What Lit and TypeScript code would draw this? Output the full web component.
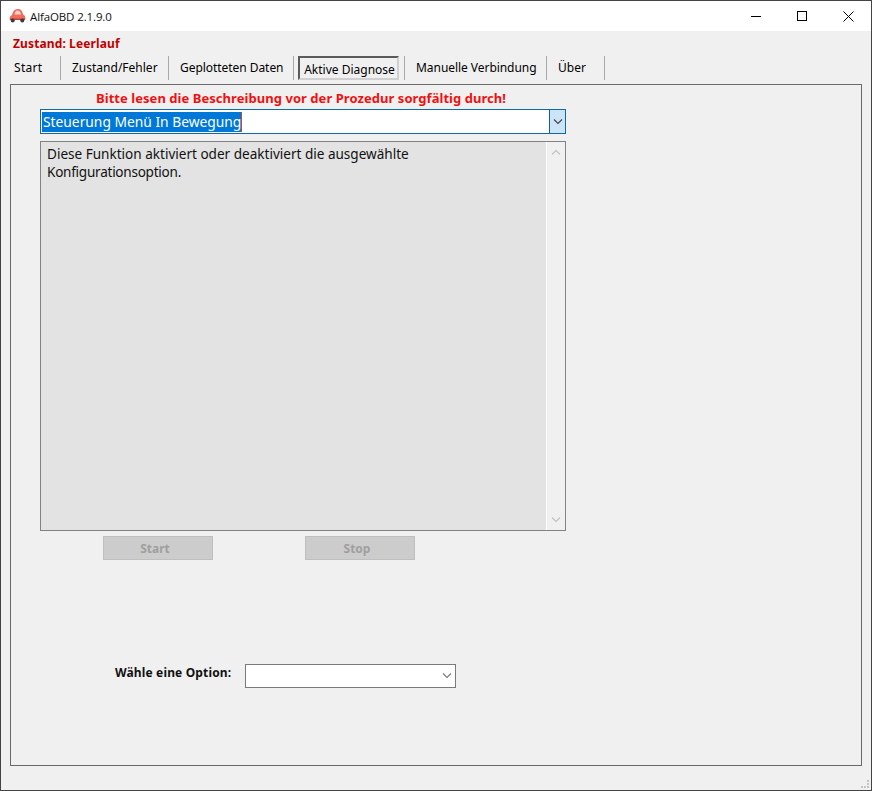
import { LitElement, html, css } from "lit";
import { customElement } from "lit/decorators.js";

const chev = (c: string, up = false) => html`<svg width="10" height="6" viewBox="0 0 10 6"><path d="${up ? "M1 5.500L5 1.500L9 5.500" : "M1 .5L5 4.500L9 .5"}" fill="none" stroke="${c}" stroke-width="1.100"/></svg>`;

@customElement("app-root")
export class AppRoot extends LitElement {
  static styles = css`
    :host { display: block; width: 872px; height: 791px; font-family: "Noto Sans", "Liberation Sans", sans-serif; font-size: 12px; color: #000; }
    .win { box-sizing: border-box; width: 872px; height: 791px; border: 1px solid #444; background: #f0f0f0; display: flex; flex-direction: column; position: relative; overflow: hidden; }
    .title { height: 30px; background: #fff; display: flex; align-items: center; flex: none; }
    .logo { margin: 0 0 2px 8px; width: 17px; height: 15px; display: block; }
    .tt { margin-left: 4px; font-family: "Open Sans", sans-serif; font-size: 11.5px; letter-spacing: -.12px; color: #111; }
    .ctrls { margin-left: auto; display: flex; align-items: center; }
    .ctrl { width: 46px; height: 30px; display: flex; align-items: center; justify-content: center; }
    .state { margin: 5px 0 0 12px; height: 15px; line-height: 15px; font-weight: 700; color: #c00000; font-size: 12px; letter-spacing: .12px; }
    .tabs { display: flex; height: 25px; margin: 4px 0 0 0; align-items: center; }
    .tab { box-sizing: border-box; height: 24px; display: flex; align-items: center; font-size: 12px; border-right: 1px solid #a8a8a8; }
    .t1 { width: 60px; padding-left: 13px; letter-spacing: .3px; }
    .t2 { width: 108px; padding-left: 11px; }
    .t3 { width: 125px; padding-left: 11px; letter-spacing: -.05px; }
    .t4 { width: 111px; padding-left: 4px; }
    .t5 { width: 142px; padding-left: 11px; letter-spacing: -.05px; }
    .t6 { width: 58px; padding-left: 11px; }
    .active { box-sizing: border-box; width: 101px; height: 24px; border: 2px solid; border-color: #5a5a5a #d0d0d0 #d0d0d0 #5a5a5a; display: flex; align-items: center; justify-content: center; padding: 3px 0 0 2px; }
    .panel { box-sizing: border-box; margin: 4px 9px 0 9px; height: 682px; border: 1px solid #6a6a6a; position: relative; padding-left: 29px; }
    .warn { margin-left: 56px; height: 24px; line-height: 26px; font-size: 13px; font-weight: 700; color: #f01010; letter-spacing: .05px; }
    .combo { box-sizing: border-box; width: 526px; height: 25px; border: 1px solid #0f6ba8; background: #fff; display: flex; }
    .sel { box-sizing: border-box; margin: 2px 0 0 1px; height: 20px; line-height: 20px; padding: 0 0 0 1px; border-right: 1px solid #b0503c; background: #0078d7; color: #fff; font-size: 13.8px; }
    .dd { margin-left: auto; box-sizing: border-box; width: 16px; border-left: 1px solid #0f5f94; background: #cce4f7; display: flex; align-items: center; justify-content: center; }
    .text { box-sizing: border-box; margin-top: 7px; width: 526px; height: 390px; border: 1px solid #828282; display: flex; background: #f0f0f0; }
    .desc { box-sizing: border-box; width: 506px; background: #e3e3e3; padding: 3px 6px; font-size: 13.55px; line-height: 18px; color: #111; border-right: 1px solid #fff; }
    .l2 { letter-spacing: -.25px; }
    .sb { flex: 1; display: flex; flex-direction: column; align-items: center; justify-content: space-between; padding: 7px 0; }
    .btns { display: flex; margin: 5px 0 0 63px; gap: 92px; }
    .btn { box-sizing: border-box; width: 110px; height: 24px; border: 1px solid #bfbfbf; background: #cccccc; color: #9f9f9f; font-weight: 700; font-size: 12px; display: flex; align-items: center; justify-content: center; padding-right: 6px; }
    .opt { display: flex; margin: 104px 0 0 75px; align-items: flex-start; }
    .lbl { width: 130px; padding-top: 1px; font-weight: 700; font-size: 12px; letter-spacing: .15px; line-height: 16px; color: #111; }
    .cb { box-sizing: border-box; width: 211px; height: 24px; border: 1px solid #7a7a7a; background: #fff; display: flex; align-items: center; justify-content: flex-end; padding-right: 3px; }
    .grip { position: absolute; right: 1px; bottom: 1px; width: 9px; height: 9px; }
  `;

  render() {
    return html`<div class="win">
      <div class="title">
        <svg class="logo" viewBox="0 0 17 15">
          <path d="M.5 11.500 C.5 8.500 2 7.500 3 7 C4 3 5.500 1 8.500 1 C12 1 13.500 3 14 6.500 C15.500 7 16.500 8.500 16.500 11.500 Z" fill="#ee6b5e"/>
          <path d="M5.500 6.500 C6 3.500 7 2.500 8.500 2.500 C10.500 2.500 11.500 3.500 12 6.500 Z" fill="#fbd0c4"/>
          <rect x="1" y="10.500" width="15" height="1.500" fill="#c0453a"/>
          <circle cx="3.700" cy="12.500" r="2" fill="#3a3a3a"/><circle cx="13.300" cy="12.500" r="2" fill="#3a3a3a"/>
        </svg>
        <span class="tt">AlfaOBD 2.1.9.0</span>
        <div class="ctrls">
          <div class="ctrl"><svg width="10" height="10"><path d="M0 5.500H10" stroke="#000"/></svg></div>
          <div class="ctrl"><svg width="10" height="10"><rect x=".5" y=".5" width="9" height="9" fill="none" stroke="#000"/></svg></div>
          <div class="ctrl"><svg width="11" height="11"><path d="M.5 .5L10.500 10.500M10.500 .5L.5 10.500" stroke="#000"/></svg></div>
        </div>
      </div>
      <div class="state">Zustand: Leerlauf</div>
      <div class="tabs">
        <div class="tab t1">Start</div>
        <div class="tab t2">Zustand/Fehler</div>
        <div class="tab t3">Geplotteten Daten</div>
        <div class="tab t4"><div class="active">Aktive Diagnose</div></div>
        <div class="tab t5">Manuelle Verbindung</div>
        <div class="tab t6">Über</div>
      </div>
      <div class="panel">
        <div class="warn">Bitte lesen die Beschreibung vor der Prozedur sorgfältig durch!</div>
        <div class="combo"><span class="sel">Steuerung Menü In Bewegung</span><div class="dd">${chev("#444")}</div></div>
        <div class="text">
          <div class="desc">Diese Funktion aktiviert oder deaktiviert die ausgewählte<br><span class="l2">Konfigurationsoption.</span></div>
          <div class="sb">${chev("#c0c0c0", true)}${chev("#c0c0c0")}</div>
        </div>
        <div class="btns"><div class="btn">Start</div><div class="btn">Stop</div></div>
        <div class="opt"><div class="lbl">Wähle eine Option:</div><div class="cb">${chev("#777")}</div></div>
      </div>
      <svg class="grip" viewBox="0 0 9 9" fill="#c4c4c4"><rect x="6" y="0" width="2" height="2"/><rect x="6" y="3" width="2" height="2"/><rect x="6" y="6" width="2" height="2"/><rect x="3" y="6" width="2" height="2"/><rect x="0" y="6" width="2" height="2"/></svg>
    </div>`;
  }
}
